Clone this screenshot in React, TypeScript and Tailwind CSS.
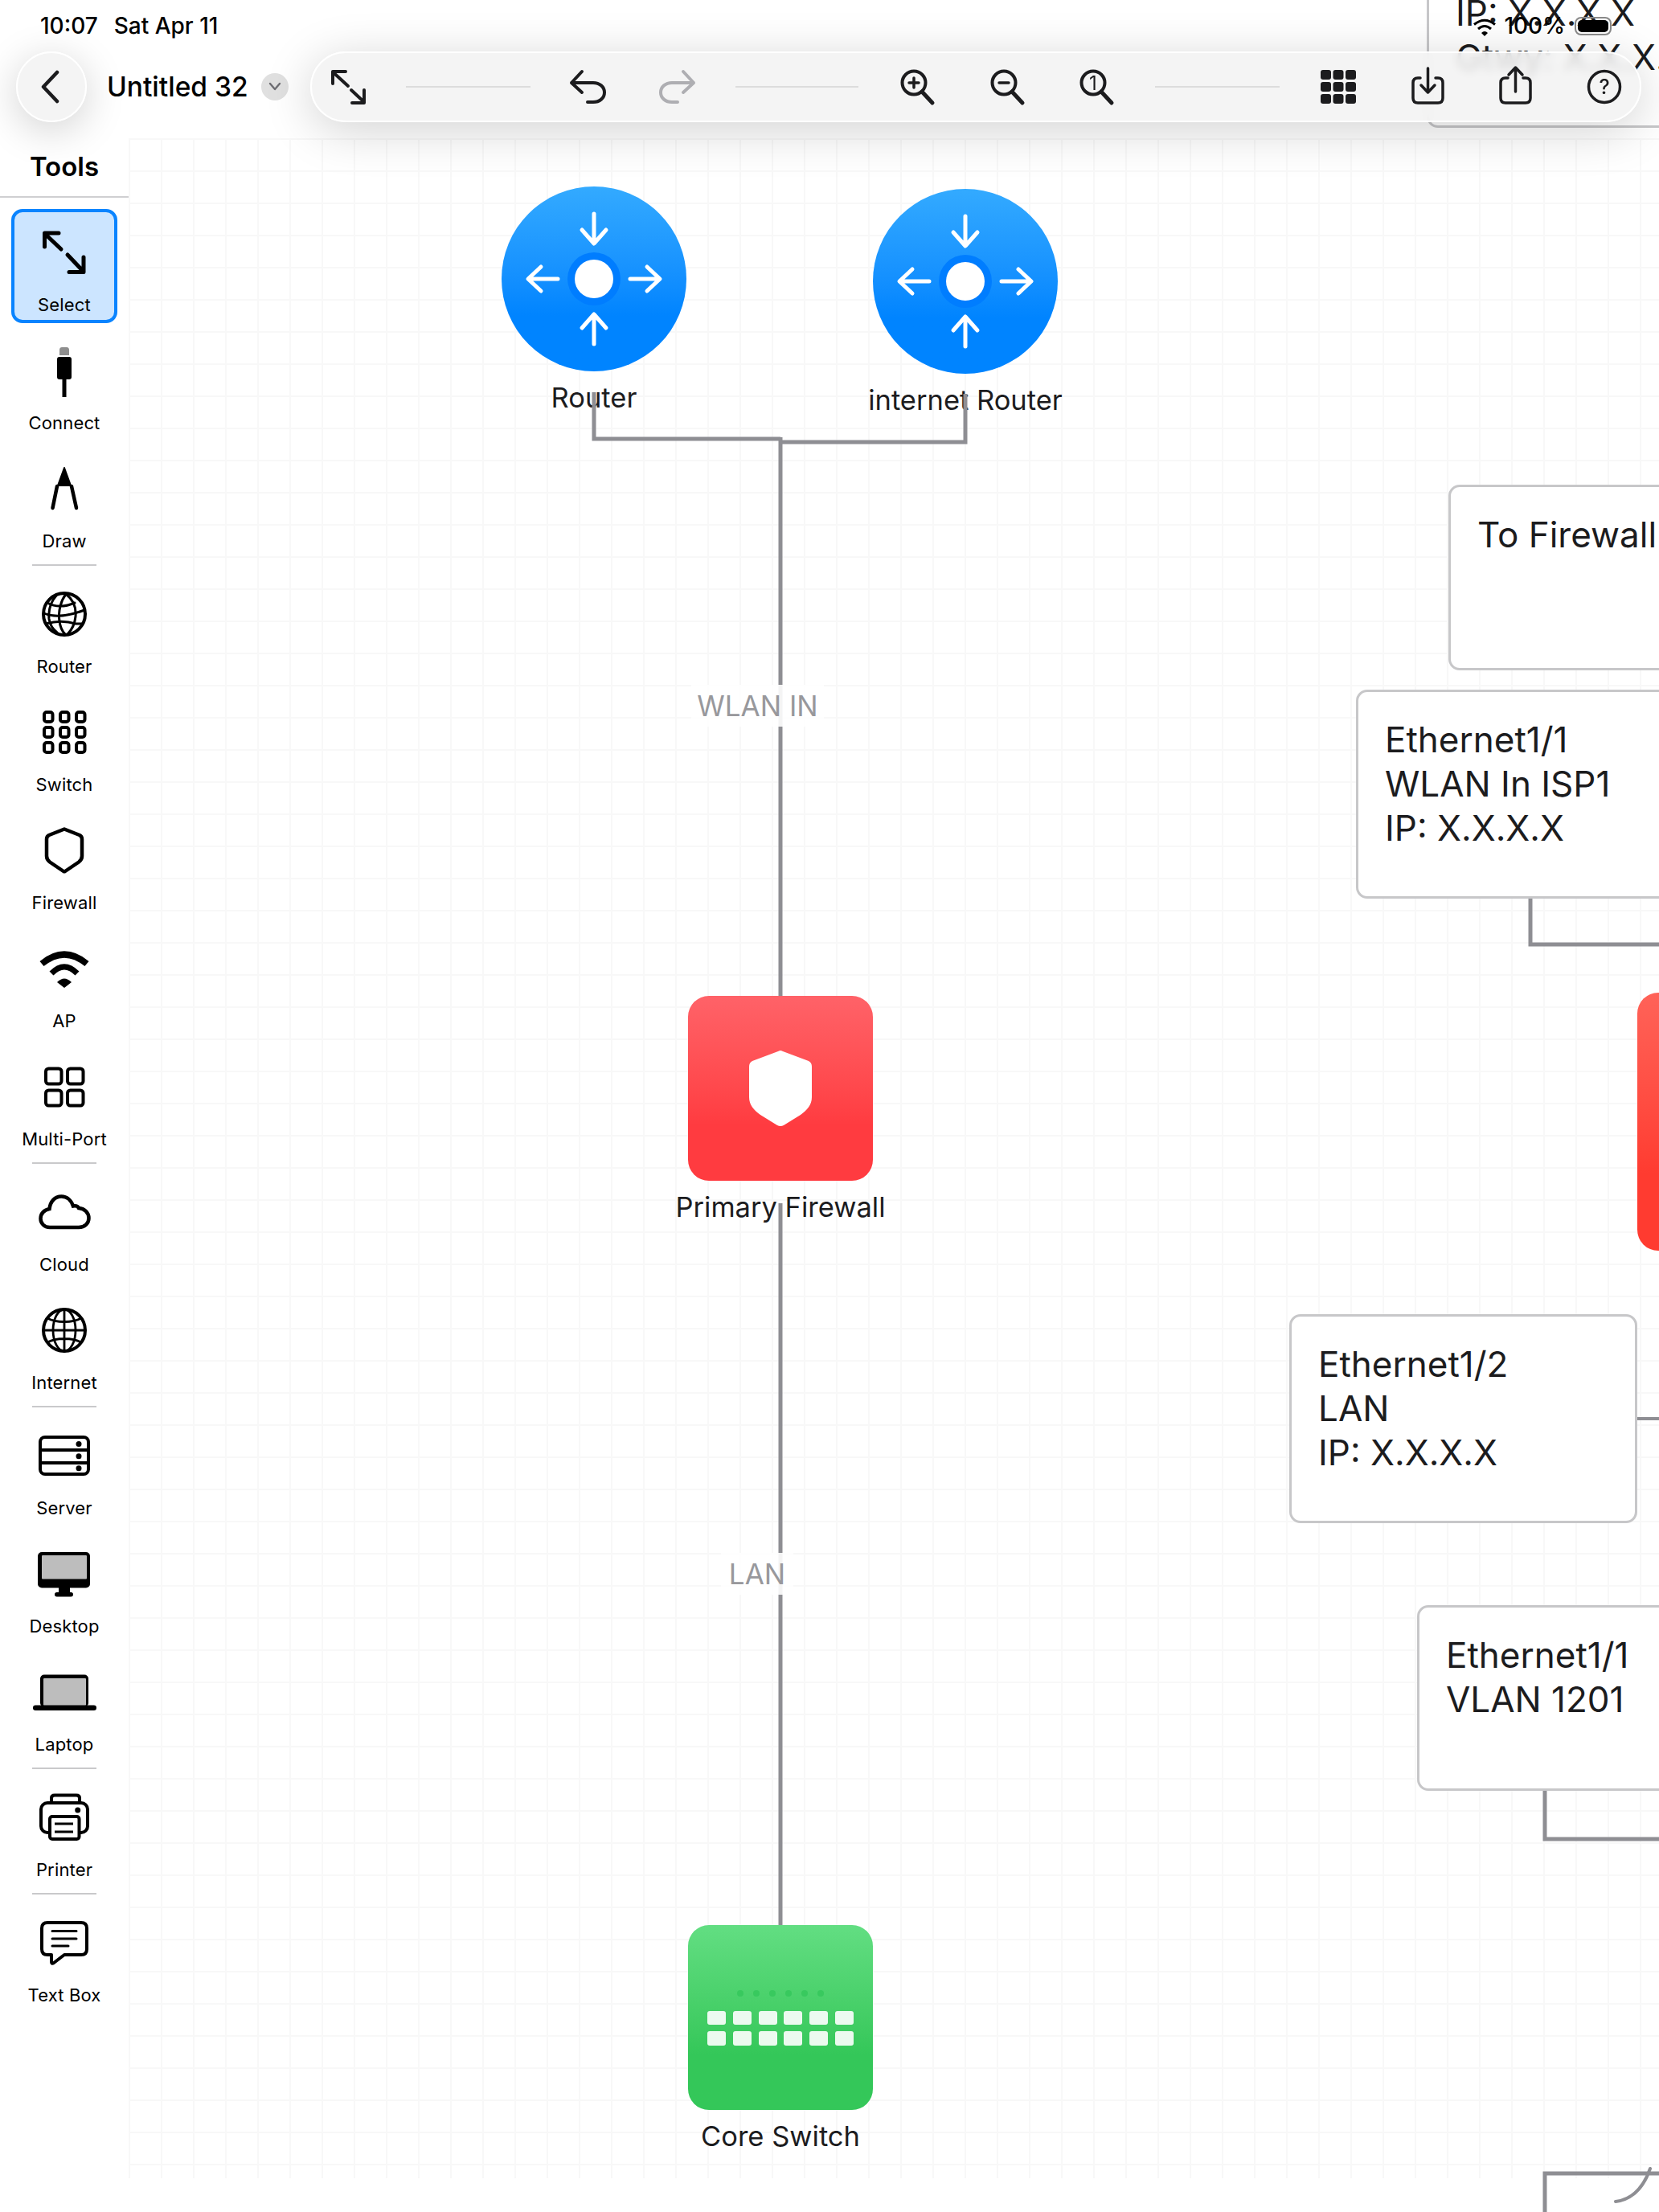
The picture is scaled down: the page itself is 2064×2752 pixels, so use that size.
import type { ReactNode } from 'react';

const INK = '#1c1c1e';

function Glyph({ children, size = 64 }: { children: ReactNode; size?: number }) {
  return (
    <svg width={size} height={size} viewBox={`0 0 ${size} ${size}`} fill="none" className="overflow-visible shrink-0">
      {children}
    </svg>
  );
}

/* sidebar icons, drawn in a 64 box */
const SelectIcon = () => (
  <Glyph>
    <g stroke="#000" strokeWidth={5} strokeLinecap="round" strokeLinejoin="round">
      <path d="M25 8H7.5V25M8 9L28 28M36 35L56 56M56 38V56.5H38" />
    </g>
  </Glyph>
);
const ConnectIcon = () => (
  <Glyph>
    <path d="M26 13V6.5Q26 3 29 3H35Q38 3 38 6.5V13Z" fill="#8e8e8e" />
    <rect x={23} y={15} width={18} height={28} rx={3} fill="#000" />
    <rect x={29.5} y={43} width={5} height={22} fill="#000" />
  </Glyph>
);
const DrawIcon = () => (
  <Glyph>
    <path d="M32 6L40 28H24Z" fill="#000" stroke="#000" strokeWidth={2} strokeLinejoin="round" />
    <path d="M23 29L17.5 56M41 29L47 56" stroke="#000" strokeWidth={4.5} strokeLinecap="round" />
  </Glyph>
);
const RouterGlobe = () => (
  <Glyph>
    <circle cx={32} cy={32} r={26} stroke="#000" strokeWidth={4} />
    <g stroke="#000" strokeWidth={3} strokeLinecap="round">
      <path d="M34 7C28 15 24 28 26 41C27 49 30 54 33 57" />
      <path d="M22 9C15 17 12 27 13 38C14 45 18 51 23 55" />
      <path d="M34 7C43 14 47 24 46 35C45 45 41 52 36 57" />
      <path d="M11 18C20 23 31 24 45 18" />
      <path d="M7 31C18 36 33 36 57 27" />
      <path d="M9 44C20 41 33 40 46 44L55 44" />
    </g>
  </Glyph>
);
const SwitchIcon = () => (
  <Glyph>
    <g stroke="#000" strokeWidth={4}>
      {[7, 27, 47].map((x) =>
        [7, 26, 45].map((y) => <rect key={`${x}-${y}`} x={x} y={y} width={10.5} height={12} rx={3} />)
      )}
    </g>
  </Glyph>
);
const ShieldIcon = () => (
  <Glyph>
    <path
      d="M32 5.5L51 13Q54 14.5 54 18V39Q54 43.5 50 46.5L33 58Q32 58.5 31 58L14 46.5Q10 43.5 10 39V18Q10 14.5 13 13Z"
      stroke="#000"
      strokeWidth={4.5}
      strokeLinejoin="round"
    />
  </Glyph>
);
const WifiIcon = () => (
  <Glyph>
    <path d="M4 26Q32 3 60 26" stroke="#000" strokeWidth={8} />
    <path d="M16 38Q32 22 48 38" stroke="#000" strokeWidth={7} />
    <path d="M23 49Q32 40 41 49L32 56Z" fill="#000" />
  </Glyph>
);
const MultiPortIcon = () => (
  <Glyph>
    <g stroke="#000" strokeWidth={4}>
      <rect x={9} y={9.5} width={19.5} height={19} rx={3.5} />
      <rect x={36} y={9.5} width={19.5} height={19} rx={3.5} />
      <rect x={9} y={36.5} width={19.5} height={19} rx={3.5} />
      <rect x={36} y={36.5} width={19.5} height={19} rx={3.5} />
    </g>
  </Glyph>
);
const CloudIcon = () => (
  <Glyph>
    <path
      d="M14 51H50C57.5 51 62.5 46 62.5 39.5C62.5 32.5 57 27.5 50 27C49 25 46 24 43 24.5C40.5 17 35 12.5 28.5 12.5C20 12.5 14.5 19 13.5 28C7 29 2.5 34 2.5 40C2.5 46 7 51 14 51Z"
      stroke="#000"
      strokeWidth={4.5}
    />
  </Glyph>
);
const InternetIcon = () => (
  <Glyph>
    <circle cx={32} cy={32} r={26} stroke="#000" strokeWidth={4} />
    <g stroke="#000" strokeWidth={2.8}>
      <ellipse cx={32} cy={32} rx={14} ry={26} />
      <path d="M32 6V58M6 32H58M11 17C22 23 42 23 53 17M11 47C22 41 42 41 53 47" />
    </g>
  </Glyph>
);
const ServerIcon = () => (
  <Glyph>
    <rect x={2} y={9} width={60} height={46} rx={6} stroke="#000" strokeWidth={4} />
    <path d="M2 25H62M2 41H62" stroke="#000" strokeWidth={4} />
    <circle cx={50} cy={17.5} r={3.5} fill="#000" />
    <circle cx={50} cy={32.8} r={3.5} fill="#000" />
    <circle cx={50} cy={47.8} r={3.5} fill="#000" />
  </Glyph>
);
const DesktopIcon = () => (
  <Glyph>
    <rect x={-1} y={5} width={65} height={44.5} rx={5} fill="#000" />
    <rect x={4} y={9} width={56} height={29.5} rx={1} fill="#bdbdbd" />
    <rect x={25} y={49} width={14} height={8} fill="#000" />
    <rect x={20} y={55} width={23} height={5.5} rx={2.7} fill="#000" />
  </Glyph>
);
const LaptopIcon = () => (
  <Glyph>
    <rect x={2} y={10.5} width={60} height={40} rx={5} fill="#000" />
    <rect x={6} y={15} width={53} height={34} rx={1} fill="#bdbdbd" />
    <rect x={-7} y={48.5} width={79} height={6.5} rx={3.2} fill="#000" />
  </Glyph>
);
const PrinterIcon = () => (
  <Glyph>
    <g stroke="#000" strokeWidth={4}>
      <path d="M16 13V8Q16 4.5 20 4.5H47Q51 4.5 51 8V13" />
      <rect x={3} y={14} width={58} height={37} rx={8} />
      <rect x={14} y={31} width={36.5} height={28} rx={3} fill="#fff" />
      <path d="M20 40H43M20 50H43" strokeWidth={3} />
    </g>
    <circle cx={48.7} cy={23} r={3.5} fill="#000" />
  </Glyph>
);
const TextBoxIcon = () => (
  <Glyph>
    <path
      d="M12 7H53Q60 7 60 14V40Q60 47 53 47H32L19 57Q16 59 16 56V47H11Q4 47 4 40V14Q4 7 11 7Z"
      stroke="#000"
      strokeWidth={4}
      strokeLinejoin="round"
    />
    <path d="M17 17.5H47M17 27H47M17 36H37" stroke="#000" strokeWidth={3} strokeLinecap="round" />
  </Glyph>
);

const TOOL_GROUPS: { label: string; icon: ReactNode }[][] = [
  [
    { label: 'Select', icon: <SelectIcon /> },
    { label: 'Connect', icon: <ConnectIcon /> },
    { label: 'Draw', icon: <DrawIcon /> },
  ],
  [
    { label: 'Router', icon: <RouterGlobe /> },
    { label: 'Switch', icon: <SwitchIcon /> },
    { label: 'Firewall', icon: <ShieldIcon /> },
    { label: 'AP', icon: <WifiIcon /> },
    { label: 'Multi-Port', icon: <MultiPortIcon /> },
  ],
  [
    { label: 'Cloud', icon: <CloudIcon /> },
    { label: 'Internet', icon: <InternetIcon /> },
  ],
  [
    { label: 'Server', icon: <ServerIcon /> },
    { label: 'Desktop', icon: <DesktopIcon /> },
    { label: 'Laptop', icon: <LaptopIcon /> },
  ],
  [{ label: 'Printer', icon: <PrinterIcon /> }],
  [{ label: 'Text Box', icon: <TextBoxIcon /> }],
];

function Sidebar() {
  return (
    <aside className="w-[160px] flex flex-col items-center">
      <div className="w-full h-[94px] flex items-end justify-center pb-[17px] border-b-2 border-[#cfcfd1]">
        <span className="text-[33px] leading-[40px] font-semibold text-black">Tools</span>
      </div>
      <div className="pt-[14px] flex flex-col items-center">
        {TOOL_GROUPS.map((group, gi) => (
          <div key={gi} className="flex flex-col items-center">
            {gi > 0 && <div className="w-[80px] h-[2px] bg-[#c9c9cb] my-[6px]" />}
            <div className="flex flex-col items-center gap-[5px]">
              {group.map((tool) => {
                const active = tool.label === 'Select';
                return (
                  <div
                    key={tool.label}
                    className={
                      active
                        ? 'relative w-[132px] h-[142px] rounded-[14px] border-[4px] border-[#0a84ff] bg-[#cce5ff]'
                        : 'relative w-[132px] h-[142px]'
                    }
                  >
                    <div
                      className={
                        active
                          ? 'absolute left-[30px] top-[18px]'
                          : 'absolute left-[34px] top-[22px]'
                      }
                    >
                      {tool.icon}
                    </div>
                    <span
                      className={
                        active
                          ? 'absolute inset-x-[-4px] top-[101px] text-center text-[22px] leading-[28px] tracking-[0.15px] text-black'
                          : 'absolute inset-x-0 top-[105px] text-center text-[22px] leading-[28px] tracking-[0.15px] text-black'
                      }
                    >
                      {tool.label}
                    </span>
                  </div>
                );
              })}
            </div>
          </div>
        ))}
      </div>
    </aside>
  );
}

/* toolbar icons, drawn in a 48 box */
function BarIcon({ children }: { children: ReactNode }) {
  return (
    <svg
      width={48}
      height={48}
      viewBox="0 0 48 48"
      fill="none"
      stroke={INK}
      strokeWidth={4}
      strokeLinecap="round"
      strokeLinejoin="round"
      className="shrink-0 overflow-visible"
    >
      {children}
    </svg>
  );
}

const Separator = ({ className }: { className: string }) => <div className={`h-[2px] bg-[#dcdcdc] ${className}`} />;

function Toolbar() {
  return (
    <div className="w-[1656px] h-[88px] rounded-[44px] border-2 border-white bg-[#f2f2f2]/85 backdrop-blur-[6px] shadow-[0_10px_60px_rgba(0,0,0,0.18)] flex items-center pl-[22px]">
      <BarIcon>
        <path d="M20 5H4V20M4.5 6L23 23M27 28L43 43M43 28V44H28" />
      </BarIcon>
      <Separator className="ml-[47px] w-[155px]" />
      <div className="ml-[47px]">
        <BarIcon>
          <path d="M17 5L4 19L17 31M4 19H31C39 19 45 24 45 31C45 38 39 43 31 43H24" />
        </BarIcon>
      </div>
      <div className="ml-[64px]">
        <BarIcon>
          <path
            d="M31 5L44 19L31 31M44 19H17C9 19 3 24 3 31C3 38 9 43 17 43H24"
            stroke="#aeaeb2"
          />
        </BarIcon>
      </div>
      <Separator className="ml-[48px] w-[153px]" />
      <div className="ml-[49px]">
        <BarIcon>
          <circle cx={20} cy={19} r={14.5} />
          <path d="M30 30L43 44" strokeWidth={5} />
          <path d="M20 13V25M14 19H26" strokeWidth={3.5} />
        </BarIcon>
      </div>
      <div className="ml-[64px]">
        <BarIcon>
          <circle cx={20} cy={19} r={14.5} />
          <path d="M30 30L43 44" strokeWidth={5} />
          <path d="M14 19H26" strokeWidth={3.5} />
        </BarIcon>
      </div>
      <div className="ml-[63px]">
        <BarIcon>
          <circle cx={20} cy={19} r={14.5} />
          <path d="M30 30L43 44" strokeWidth={5} />
          <text x={20} y={27.5} textAnchor="middle" fontSize={24} fill={INK} stroke="none" fontFamily="Inter, sans-serif">
            1
          </text>
        </BarIcon>
      </div>
      <Separator className="ml-[49px] w-[155px]" />
      <div className="ml-[49px]">
        <BarIcon>
          <g fill={INK} stroke="none">
            {[2, 17.5, 33].map((x) =>
              [3, 18, 33].map((y) => <rect key={`${x}-${y}`} x={x} y={y} width={13} height={12} rx={3} />)
            )}
          </g>
        </BarIcon>
      </div>
      <div className="ml-[63px]">
        <BarIcon>
          <path d="M15 13H12Q6 13 6 19V38Q6 44 12 44H37Q43 44 43 38V19Q43 13 37 13H34" strokeWidth={3.5} />
          <path d="M24.5 1V30M16 22L24.5 31L33 22" strokeWidth={3.5} />
        </BarIcon>
      </div>
      <div className="ml-[61px]">
        <BarIcon>
          <path d="M15 13H12Q6 13 6 19V38Q6 44 12 44H37Q43 44 43 38V19Q43 13 37 13H34" strokeWidth={3.5} />
          <path d="M24.5 30V1M16 9L24.5 0L33 9" strokeWidth={3.5} />
        </BarIcon>
      </div>
      <div className="ml-[63px]">
        <BarIcon>
          <circle cx={24} cy={24} r={19.5} strokeWidth={3.5} />
          <text x={24} y={33} textAnchor="middle" fontSize={25} fontWeight={500} fill={INK} stroke="none" fontFamily="Inter, sans-serif">
            ?
          </text>
        </BarIcon>
      </div>
    </div>
  );
}

function StatusBar() {
  return (
    <div className="h-[64px] relative flex items-start justify-between pl-[50px] pr-[59px] pt-[15px] text-[28px] leading-[34px] font-medium text-black">
      <div className="flex gap-[20px]">
        <span>10:07</span>
        <span>Sat Apr 11</span>
      </div>
      <div className="flex items-center gap-[10px]">
        <svg width={28} height={24} viewBox="0 0 28 24" className="mt-[4px]">
          <path d="M1 8.5Q14 -2 27 8.5" fill="none" stroke="#000" strokeWidth={3} />
          <path d="M6 14Q14 7 22 14" fill="none" stroke="#000" strokeWidth={3} />
          <path d="M10 19Q14 15 18 19L14 23Z" fill="#000" />
        </svg>
        <span>100%</span>
        <div className="ml-[2px] w-[46px] h-[23px] rounded-[8px] border-2 border-[#8a8a8a] p-[2px]">
          <div className="w-full h-full rounded-[5px] bg-black" />
        </div>
      </div>
    </div>
  );
}

function TextBox({ className, lines }: { className: string; lines: string[] }) {
  return (
    <div className={`absolute rounded-[14px] border-[3px] border-[#c7c7c9] bg-white pl-[33px] pt-[32px] text-[44px] leading-[55px] text-[#1c1c1e] whitespace-nowrap ${className}`}>
      {lines.map((line) => (
        <div key={line}>{line}</div>
      ))}
    </div>
  );
}

function NodeLabel({ children }: { children: ReactNode }) {
  return <span className="mt-[13px] whitespace-nowrap text-[34.5px] leading-[40px] text-[#1c1c1e]">{children}</span>;
}

function RouterNode({ className, label }: { className: string; label: string }) {
  return (
    <div className={`absolute w-[230px] flex flex-col items-center ${className}`}>
      <div className="w-[230px] h-[230px] rounded-full bg-linear-to-b from-[#33aaff] to-[#0084ff] to-70%">
        <svg width={230} height={230} viewBox="-115 -115 230 230" fill="none">
          <circle r={33} fill="#007dff" />
          <circle r={24} fill="#fff" />
          <g stroke="#fff" strokeWidth={5} strokeLinecap="round" strokeLinejoin="round">
            <path d="M0 -81V-46M-15 -61L0 -44L15 -61" />
            <path d="M0 81V46M-15 61L0 44L15 61" />
            <path d="M-45 0H-81M-66 -15L-82 0L-66 15" />
            <path d="M45 0H81M66 -15L82 0L66 15" />
          </g>
        </svg>
      </div>
      <NodeLabel>{label}</NodeLabel>
    </div>
  );
}

function FirewallNode() {
  return (
    <div className="absolute left-[856px] top-[1239px] w-[230px] flex flex-col items-center">
      <div className="w-[230px] h-[230px] rounded-[26px] bg-linear-to-b from-[#ff6268] to-[#ff3b40] to-70% flex items-center justify-center">
        <svg width={78} height={95} viewBox="0 0 78 95">
          <path
            d="M39 0Q40 0 42 1L74 13Q78 15 78 20V58C78 68 72 74 64 80L43 93Q39 95 35 93L14 80C6 74 0 68 0 58V20Q0 15 4 13L36 1Q38 0 39 0Z"
            fill="#fff"
          />
        </svg>
      </div>
      <NodeLabel>Primary Firewall</NodeLabel>
    </div>
  );
}

function SwitchNode() {
  return (
    <div className="absolute left-[856px] top-[2395px] w-[230px] flex flex-col items-center">
      <div className="w-[230px] h-[230px] rounded-[26px] bg-linear-to-b from-[#62de82] to-[#34c759] to-70% flex flex-col items-center justify-center">
        <div className="flex gap-[12px] mb-[18px]">
          {[0, 1, 2, 3, 4, 5].map((i) => (
            <div key={i} className="w-[8px] h-[8px] rounded-full bg-[#38c95e]" />
          ))}
        </div>
        <div className="grid grid-cols-6 gap-x-[8.7px] gap-y-[8px]">
          {Array.from({ length: 12 }).map((_, i) => (
            <div key={i} className="w-[23px] h-[17.5px] rounded-[3px] bg-white/90" />
          ))}
        </div>
      </div>
      <NodeLabel>Core Switch</NodeLabel>
    </div>
  );
}

function EdgeLabel({ className, text }: { className: string; text: string }) {
  return (
    <div className={`absolute h-[52px] flex items-center justify-center bg-white/90 text-[35px] text-[#98989c] whitespace-nowrap ${className}`}>
      {text}
    </div>
  );
}

function Canvas() {
  return (
    <div className="absolute inset-0">
      <div className="absolute left-[160px] top-[172px] right-0 h-[2538px] bg-[linear-gradient(to_right,#f8f8f8_2px,transparent_2px),linear-gradient(to_bottom,#f8f8f8_2px,transparent_2px)] bg-size-[40px_40px]" />

      <TextBox className="left-[1775px] top-[-101px] w-[400px] h-[260px]" lines={['\u00a0', 'IP: X.X.X.X', 'Gtwy: X.X.X.X']} />
      <TextBox className="left-[1802px] top-[603px] w-[400px] h-[231px]" lines={['To Firewall']} />
      <TextBox className="left-[1687px] top-[858px] w-[500px] h-[260px]" lines={['Ethernet1/1', 'WLAN In ISP1', 'IP: X.X.X.X']} />
      <TextBox className="left-[1604px] top-[1635px] w-[433px] h-[260px]" lines={['Ethernet1/2', 'LAN', 'IP: X.X.X.X']} />
      <TextBox className="left-[1763px] top-[1997px] w-[400px] h-[231px]" lines={['Ethernet1/1', 'VLAN 1201']} />

      <RouterNode className="left-[624px] top-[232px]" label="Router" />
      <RouterNode className="left-[1086px] top-[235px]" label="internet Router" />
      <FirewallNode />
      <SwitchNode />
      <div className="absolute left-[2037px] top-[1235px] w-[321px] h-[321px] rounded-[26px] bg-linear-to-b from-[#ff6258] to-[#ff3b30] to-70%" />

      <svg width={2064} height={2752} viewBox="0 0 2064 2752" fill="none" stroke="#8e8e93" strokeWidth={5} className="absolute left-0 top-0">
        <path d="M739 488V546H971" />
        <path d="M1201 490V550H971" />
        <path d="M971 544V1239" />
        <path d="M971 1497V2395" />
        <path d="M1904 1118V1175H2064" />
        <path d="M2037 1765H2064" strokeWidth={4} />
        <path d="M1922 2228V2288H2064" />
        <path d="M1922 2752V2704H2064" />
        <path d="M2010 2739Q2040 2735 2053 2698" strokeWidth={4} strokeLinecap="round" />
      </svg>

      <EdgeLabel className="left-[860px] top-[852px] w-[165px]" text="WLAN IN" />
      <EdgeLabel className="left-[897px] top-[1932px] w-[90px]" text="LAN" />
    </div>
  );
}

export default function App() {
  return (
    <div
      className="relative w-[2064px] h-[2752px] overflow-hidden bg-white"
      style={{ fontFamily: 'Inter, "Noto Sans", sans-serif' }}
    >
      <Canvas />
      <div className="relative flex flex-col">
        <StatusBar />
        <div className="flex h-[88px] pl-[20px] items-center">
          <div className="w-[88px] h-[88px] rounded-full border-2 border-white bg-[#f2f2f2]/85 shadow-[0_10px_50px_rgba(0,0,0,0.18)] flex items-center justify-center">
            <svg width={28} height={42} viewBox="0 0 28 42" fill="none">
              <path d="M21 3L4 21L21 39" stroke={INK} strokeWidth={4.5} strokeLinecap="round" strokeLinejoin="round" />
            </svg>
          </div>
          <div className="w-[278px] flex items-center">
            <span className="ml-[25px] text-[33.5px] leading-[44px] font-medium text-black whitespace-nowrap">Untitled 32</span>
            <div className="ml-auto mr-[27px] w-[34px] h-[34px] rounded-full bg-[#e0e0e0] flex items-center justify-center">
              <svg width={16} height={12} viewBox="0 0 16 12" fill="none">
                <path d="M2 2L8 9L14 2" stroke="#6e6e73" strokeWidth={2.4} strokeLinecap="round" strokeLinejoin="round" />
              </svg>
            </div>
          </div>
          <Toolbar />
        </div>
        <Sidebar />
      </div>
    </div>
  );
}
